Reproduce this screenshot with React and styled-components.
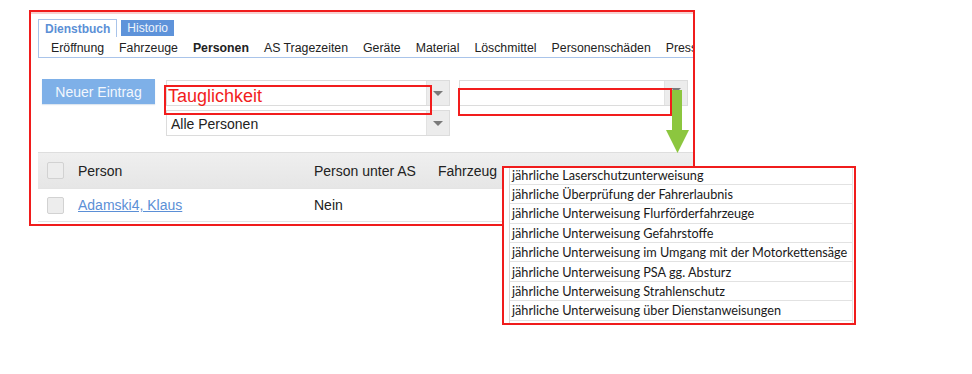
import React from 'react'
import styled, { createGlobalStyle } from 'styled-components'

const GlobalStyle = createGlobalStyle`
  html, body {
    margin: 0;
    padding: 0;
    background: #fff;
  }
  body {
    font-family: "Liberation Sans", Arial, sans-serif;
    color: #222;
  }
`

const Page = styled.div`
  position: relative;
  width: 972px;
  height: 374px;
  padding: 10px 0 0 29px;
  box-sizing: border-box;
`

const Frame = styled.div`
  position: relative;
  width: 666px;
  height: 216px;
  box-sizing: border-box;
  border: 2px solid #f01c1c;
  box-shadow: inset 0 2px 0 #f8d0d0;
  padding: 7px 0 0 7px;
  overflow: hidden;
`

const Tabs = styled.div`
  display: flex;
  align-items: flex-end;
  height: 17px;
  gap: 4px;
`

const Tab = styled.div`
  height: ${p => (p.active ? '18px' : '16px')};
  box-sizing: border-box;
  padding: 0 6px;
  display: flex;
  align-items: center;
  font-size: 12px;
  font-weight: ${p => (p.active ? 'bold' : 'normal')};
  color: ${p => (p.active ? '#5b8fd6' : '#eef3fb')};
  background: ${p => (p.active ? '#fff' : '#5e93da')};
  border: ${p => (p.active ? '1px solid #a9c4ea' : 'none')};
  border-bottom: none;
  margin-bottom: ${p => (p.active ? '-1px' : '0')};
  position: relative;
  z-index: 1;
`

const Nav = styled.div`
  display: flex;
  gap: 15px;
  height: 22px;
  box-sizing: border-box;
  align-items: flex-end;
  padding: 0 0 2px 12px;
  border-left: 1px solid #a9c4ea;
  border-bottom: 1px solid #a9c4ea;
  white-space: nowrap;
  font-size: 12.3px;
`

const NavItem = styled.span`
  color: #222;
  font-weight: ${p => (p.active ? 'bold' : 'normal')};
`

const Toolbar = styled.div`
  display: flex;
  align-items: flex-start;
  margin-top: 22px;
`

const Button = styled.div`
  margin-left: 4px;
  margin-top: -1px;
  width: 113px;
  height: 25px;
  display: flex;
  align-items: center;
  justify-content: center;
  background: #7eb0e8;
  color: #f2f7fd;
  font-size: 14px;
  box-shadow: 0 1px 1px #dde6f0;
`

const SelectColumn = styled.div`
  display: flex;
  flex-direction: column;
  gap: 4px;
  margin-left: ${p => p.offset}px;
  width: ${p => p.width}px;
`

const Select = styled.div`
  display: flex;
  height: 26px;
  box-sizing: border-box;
  border: 1px solid #dcdcdc;
  background: #fff;
`

const SelectValue = styled.div`
  flex: 1;
  display: flex;
  align-items: center;
  box-sizing: border-box;
  padding-left: ${p => (p.warn ? '1px' : '4px')};
  padding-top: ${p => (p.warn ? '6px' : '1px')};
  font-size: ${p => (p.warn ? '18px' : '14px')};
  color: ${p => (p.warn ? '#f21d1d' : '#222')};
  white-space: nowrap;
`

const SelectArrow = styled.div`
  width: 22px;
  display: flex;
  align-items: center;
  justify-content: center;
  background: #ececec;
  border-left: 1px solid #e2e2e2;
  &::after {
    content: '';
    margin-top: ${p => (p.raised ? '-6px' : '0')};
    border-left: 5px solid transparent;
    border-right: 5px solid transparent;
    border-top: 5px solid #7a7a7a;
  }
`

const Mark = styled.div`
  position: absolute;
  border: 2px solid #f21d1d;
  pointer-events: none;
`

const Table = styled.div`
  margin-top: 16px;
  width: 700px;
`

const Row = styled.div`
  display: grid;
  grid-template-columns: 40px 236px 124px 1fr;
  align-items: center;
  height: ${p => (p.head ? '37px' : '33px')};
  background: ${p => (p.head ? 'linear-gradient(#efefef, #e6e6e6)' : '#fff')};
  border-top: ${p => (p.head ? '1px solid #dedede' : 'none')};
  border-bottom: 1px solid #e4e4e4;
  box-sizing: border-box;
  font-size: 14px;
  white-space: nowrap;
`

const Check = styled.div`
  width: 17px;
  height: 17px;
  margin-left: 9px;
  box-sizing: border-box;
  background: #ededed;
  border: 1px solid #d2d2d2;
  border-radius: 2px;
`

const Link = styled.a`
  color: #5b8fd6;
  text-decoration: underline;
`

const Dropdown = styled.div`
  position: absolute;
  left: 502px;
  top: 166px;
  width: 354px;
  height: 159px;
  box-sizing: border-box;
  border: 2px solid #f01c1c;
  background: #fff;
  overflow: hidden;
`

const DropList = styled.div`
  margin-top: -2.6px;
  margin-left: 5px;
  margin-right: 1px;
  border-left: 1px solid #d8d8d8;
  border-right: 1px solid #e4e4e4;
`

const DropRow = styled.div`
  height: 19.4px;
  box-sizing: border-box;
  border-bottom: 1px solid #e2e2e2;
  display: flex;
  align-items: center;
  padding-left: 2px;
  font-family: Lato, "Noto Sans", sans-serif;
  font-size: 12.7px;
  color: #1a1a1a;
  white-space: nowrap;
`

const Arrow = styled.svg`
  position: absolute;
  left: 665px;
  top: 90px;
`

const navItems = [
  'Eröffnung',
  'Fahrzeuge',
  'Personen',
  'AS Tragezeiten',
  'Geräte',
  'Material',
  'Löschmittel',
  'Personenschäden',
  'Presse',
]

const options = [
  'jährliche Laserschutzunterweisung',
  'jährliche Überprüfung der Fahrerlaubnis',
  'jährliche Unterweisung Flurförderfahrzeuge',
  'jährliche Unterweisung Gefahrstoffe',
  'jährliche Unterweisung im Umgang mit der Motorkettensäge',
  'jährliche Unterweisung PSA gg. Absturz',
  'jährliche Unterweisung Strahlenschutz',
  'jährliche Unterweisung über Dienstanweisungen',
]

export default function App() {
  return (
    <Page>
      <GlobalStyle />
      <Frame>
        <Tabs>
          <Tab active>Dienstbuch</Tab>
          <Tab>Historio</Tab>
        </Tabs>
        <Nav>
          {navItems.map(item => (
            <NavItem key={item} active={item === 'Personen'}>{item}</NavItem>
          ))}
        </Nav>
        <Toolbar>
          <Button>Neuer Eintrag</Button>
          <SelectColumn offset={11} width={284}>
            <Select>
              <SelectValue warn>Tauglichkeit</SelectValue>
              <SelectArrow />
            </Select>
            <Select>
              <SelectValue>Alle Personen</SelectValue>
              <SelectArrow />
            </Select>
          </SelectColumn>
          <SelectColumn offset={9} width={229}>
            <Select>
              <SelectValue />
              <SelectArrow raised />
            </Select>
          </SelectColumn>
        </Toolbar>
        <Table>
          <Row head>
            <Check />
            <span>Person</span>
            <span>Person unter AS</span>
            <span>Fahrzeug</span>
          </Row>
          <Row>
            <Check />
            <span><Link>Adamski4, Klaus</Link></span>
            <span>Nein</span>
            <span />
          </Row>
        </Table>
        <Mark style={{ left: 133, top: 73, width: 264, height: 26 }} />
        <Mark style={{ left: 427, top: 76, width: 210, height: 24 }} />
      </Frame>
      <Arrow width="26" height="64" viewBox="0 0 26 64">
        <rect x="7" y="0" width="10" height="42" fill="#8cc63f" />
        <polygon points="1,40 24,40 12.5,63" fill="#8cc63f" />
      </Arrow>
      <Dropdown>
        <DropList>
          {options.map(o => (
            <DropRow key={o}>{o}</DropRow>
          ))}
          <DropRow />
        </DropList>
      </Dropdown>
    </Page>
  )
}
